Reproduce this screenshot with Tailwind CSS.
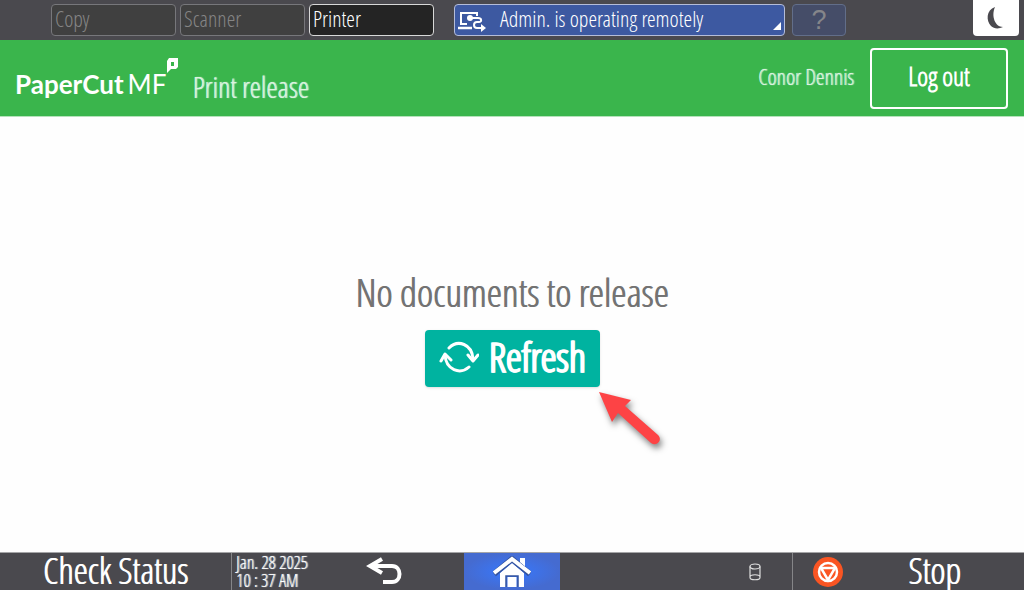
<!DOCTYPE html>
<html lang="en">
  <head>
    <meta charset="UTF-8" />
    <meta name="viewport" content="width=device-width, initial-scale=1.0" />
    <title>PaperCut MF - Print release</title>
    <script src="https://cdn.jsdelivr.net/npm/@tailwindcss/browser@4"></script>
  </head>

  <body
    class="min-h-screen flex flex-col bg-[#fefefe] [text-shadow:1px_0_1px_currentColor] font-['Open_Sans_Condensed_Light','Liberation_Sans_Narrow','Noto_Sans',sans-serif]"
  >
    <!-- Device bar -->
    <header class="h-10 shrink-0 flex items-start bg-[#4a494e] pl-[51px] pr-[5px]">
      <nav class="flex gap-1 pt-1">
        <button type="button" class="w-[125px] h-8 px-[3px] pb-1 rounded border border-[#77777b] bg-[#404040] text-left text-[22px] leading-[26px] text-[#858585]">Copy</button>
        <button type="button" class="w-[125px] h-8 px-[3px] pb-1 rounded border border-[#77777b] bg-[#404040] text-left text-[22px] leading-[26px] text-[#858585]">Scanner</button>
        <button type="button" class="w-[125px] h-8 px-[3px] pb-1 rounded border border-[#d8d8d8] bg-[#242424] text-left text-[22px] leading-[26px] text-white">Printer</button>
      </nav>

      <button
        type="button"
        class="relative mt-1 ml-5 w-[331px] h-8 rounded border border-[#b4bcd8] bg-[#3d59a1] flex items-center gap-3 pl-[3px] text-[22px] leading-[26px] text-white"
      >
        <svg class="w-[30px] h-6 shrink-0" viewBox="0 0 30 24" fill="none" stroke="#fff" stroke-width="2">
          <path d="M9 16H3V5h16v3" />
          <path d="M0 20h14" stroke-width="2.5" />
          <path d="M12 10h8c4 0 4 4 1 4h-2c-4 0-4 6 0 6h6" />
          <circle cx="12" cy="10" r="3" fill="#fff" stroke="none" />
          <path d="M23 16l5 4-5 4z" fill="#fff" stroke="none" />
        </svg>
        <span class="pb-1 whitespace-nowrap">Admin. is operating remotely</span>
        <svg class="absolute right-[3px] bottom-[5px] w-2 h-2" viewBox="0 0 8 8"><path d="M8 0v8H0z" fill="#fff" /></svg>
      </button>

      <button type="button" aria-label="Help" class="mt-1 ml-[7px] w-[54px] h-8 rounded border border-[#626e89] bg-[#454d68] flex items-center justify-center font-['Liberation_Sans',sans-serif] text-[27px] leading-[28px] text-[#85868a]">?</button>

      <button type="button" aria-label="Energy saver" class="ml-auto w-[46px] h-9 rounded-b-sm bg-white flex items-center justify-center">
        <svg class="w-5 h-6" viewBox="0 0 20 24"><path d="M9 1C0 4 0 15 5 20c3 3 8 3 12 1C9 21 5 10 9 1z" fill="#4a494e" /></svg>
      </button>
    </header>

    <!-- PaperCut bar -->
    <section class="h-[77px] shrink-0 flex items-center bg-[#3ab54c] border-b border-[#b5e2bb] pl-[15px] pr-4 text-white">
      <div class="relative flex items-baseline gap-1 pt-3 pr-3 font-['Lato',sans-serif] text-[26px] leading-9 [text-shadow:none]">
        <span class="font-bold">PaperCut</span><span>MF</span>
        <svg class="absolute right-0 top-1 w-3 h-4" viewBox="0 0 12 16">
          <path d="M3 0h9v9l-2 2H5l-4 4V3z" fill="#fff" />
          <path d="M5 4h3v4H5z" fill="#3ab54c" />
        </svg>
      </div>
      <h1 class="ml-[14px] pt-[18px] text-[29px] leading-9 text-[#dcf3df]">Print release</h1>
      <span class="ml-auto pb-1 text-[22px] leading-8 text-[#dcf3df]">Conor Dennis</span>
      <button type="button" class="ml-4 w-[138px] h-[61px] rounded-sm border-2 border-white pb-1 text-[26px] leading-9 font-bold">Log out</button>
    </section>

    <main class="grow flex flex-col items-center justify-center gap-[13px] pb-4">
      <p class="text-[39px] leading-[50px] text-[#737373] [text-shadow:1px_0_currentColor]">No documents to release</p>
      <div class="relative">
        <button
          type="button"
          class="w-[175px] h-[57px] rounded-sm bg-[#00b3a0] shadow flex items-center justify-center gap-[10px] pb-[2px] text-[40px] leading-[50px] font-bold text-white [text-shadow:1px_0_currentColor]"
        >
          <svg class="w-10 h-8" viewBox="0 0 40 32" fill="none" stroke="#fff" stroke-width="3" stroke-linecap="round" stroke-linejoin="round">
            <path d="M10 7C19-2 33 3 34 18" />
            <path d="M29 14l5 6 5-6" />
            <path d="M30 26C21 34 7 29 6 14" />
            <path d="M2 20l4-7 6 6" />
          </svg>
          Refresh
        </button>
        <svg class="absolute left-[172px] top-[59px] w-[74px] h-[68px] drop-shadow-[2px_4px_3px_#00000080]" viewBox="0 0 74 68">
          <path d="M2 3l32 8-6 6 33 29c5 5-1 12-7 8L21 24l-6 9z" fill="#fd4345" />
        </svg>
      </div>
    </main>

    <!-- System bar -->
    <footer class="h-[38px] shrink-0 flex bg-[#4a494e] border-t border-[#a5a5a7] text-white">
      <button type="button" class="w-[231px] pb-[2px] text-[36px] leading-8 [text-shadow:1px_0_currentColor]">Check Status</button>
      <time datetime="2025-01-28T10:37" class="w-[117px] border-l border-[#858588] pl-1 text-[18px] leading-[18px] whitespace-nowrap">Jan. 28 2025<br />10 : 37 AM</time>
      <button type="button" aria-label="Back" class="grow flex items-center pl-[18px]">
        <svg class="w-9 h-[30px]" viewBox="0 0 36 30" fill="none" stroke="#fff" stroke-width="4">
          <path d="M6 9h20c10 0 10 16 0 16h-9" />
          <path d="M16 2L4 9l12 7" />
        </svg>
      </button>
      <button type="button" aria-label="Home" class="w-24 bg-radial from-[#3478ff] to-[#456bd0] to-70% flex items-center justify-center">
        <svg class="w-[38px] h-8" viewBox="0 0 38 32">
          <path d="M27 2h5v12h-5z" fill="#fff" />
          <path d="M7 17L19 7l12 10v14h-6V20H13v11H7z" fill="#fff" />
          <path d="M14.500 21h9v10h-9z" fill="#fff" />
          <path d="M13 31V20h12v11" fill="none" stroke="#35549e" stroke-width="1.500" />
          <path d="M1 18L19 3l18 15" fill="none" stroke="#35549e" stroke-width="6" />
          <path d="M1 17L19 3l18 14" fill="none" stroke="#fff" stroke-width="4" />
          <path d="M27 2h5v8l-5-4z" fill="#fff" />
        </svg>
      </button>
      <div class="w-[233px] flex items-center justify-end pr-[31px] border-r border-[#858588]">
        <svg class="w-3 h-[18px]" viewBox="0 0 12 18" fill="none" stroke="#dedede" stroke-width="1.200">
          <ellipse cx="6" cy="3.500" rx="5" ry="2.500" />
          <path d="M1 3.500v11c0 3 10 3 10 0v-11M1 14c0-3 10-3 10 0" />
        </svg>
      </div>
      <button type="button" class="w-[231px] flex items-center pl-5 text-[36px] leading-8 [text-shadow:1px_0_currentColor]">
        <svg class="w-[30px] h-[30px]" viewBox="0 0 30 30" fill="none" stroke="#fff" stroke-width="2.500">
          <circle cx="15" cy="15" r="15" fill="#fa5523" stroke="none" />
          <circle cx="15" cy="15" r="9" />
          <path d="M8 11h14l-7 12z" />
        </svg>
        <span class="ml-[65px] pb-[2px]">Stop</span>
      </button>
    </footer>
  </body>
</html>
